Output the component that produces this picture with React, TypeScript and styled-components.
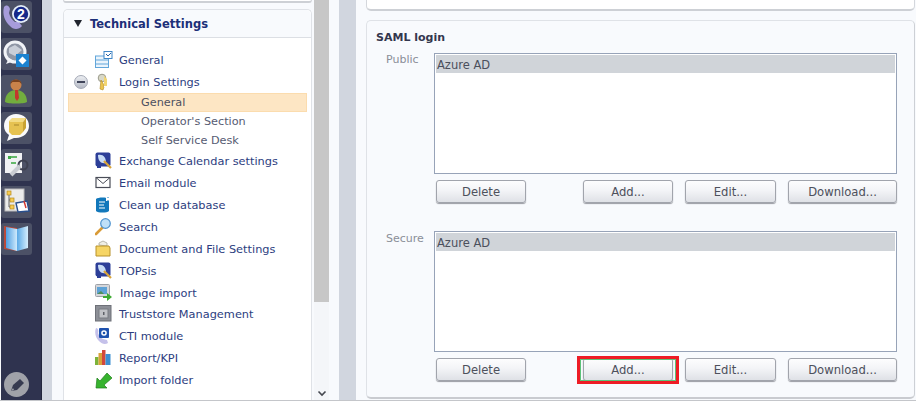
import React from "react";
import styled, { createGlobalStyle } from "styled-components";

const Global = createGlobalStyle`
  html, body { margin: 0; padding: 0; background: #f8fafd; overflow: hidden; }
  * { box-sizing: border-box; }
  body { font-family: "DejaVu Sans", Verdana, sans-serif; }
`;

const Page = styled.div`
  width: 916px; height: 401px; display: flex; overflow: hidden;
  background: #f8fafd; border-bottom: 1px solid #c4c6ca; padding-left: 1px;
`;
const Dock = styled.div`
  width: 41px; flex: none; background: #2f334f; display: flex; flex-direction: column;
  align-items: flex-start; gap: 5px; padding: 1px 0 3px 0; border-right: 1px solid #23263c;
`;
const Tile = styled.div`
  width: 31px; height: 32px; border-radius: 3px; background: #4c5166;
  display: flex; align-items: center; justify-content: center; flex: none;
`;
const DockEnd = styled.div`
  margin-top: auto; margin-left: 3px; width: 25px; height: 25px; border-radius: 50%;
  background: #a0a2a9; display: flex; align-items: center; justify-content: center;
`;
const Gutter = styled.div<{ $w: number }>`
  width: ${p => p.$w}px; flex: none; background: #d1d6df;
`;
const LeftColumn = styled.div`
  width: 287px; flex: none; display: flex; padding-left: 11px; background: #f8fafd;
`;
const LeftStack = styled.div`
  width: 249px; flex: none; display: flex; flex-direction: column; gap: 6px;
`;
const CardEnd = styled.div<{ $h: number }>`
  height: ${p => p.$h}px; flex: none; background: #fff; border: 1px solid #d4d7dc; border-top: none;
  border-bottom: 2px solid #cdd0d5; border-radius: 0 0 5px 5px;
`;
const Card = styled.div`
  flex: 1; background: #fff; border: 1px solid #dfe2e7; border-bottom: none; border-radius: 5px 5px 0 0;
  display: flex; flex-direction: column; min-height: 0;
`;
const CardHead = styled.div`
  height: 28px; flex: none; display: flex; align-items: center; gap: 8px; padding-left: 10px;
  background: #f8fafd; border-bottom: 1px solid #dcdfe4; border-radius: 5px 5px 0 0;
  font-size: 11.5px; font-weight: 700; color: #1c2f78;
`;
const Arrow = styled.span`
  width: 0; height: 0; border-left: 4px solid transparent; border-right: 4px solid transparent;
  border-top: 7px solid #20242e;
`;
const Tree = styled.div`
  padding: 11px 4px 0 4px; display: flex; flex-direction: column;
`;
const Row = styled.div<{ $nudge?: boolean }>`
  height: ${p => (p.$nudge ? 21 : 22)}px; flex: none; display: flex; align-items: center; color: #2c3d80;
  font-size: 11.35px; position: relative; padding-left: ${p => (p.$nudge ? 52 : 51)}px;
`;
const RowIcon = styled.span`
  position: absolute; left: 27px; top: 2px; width: 18px; height: 18px; display: block;
  svg { display: block; }
`;
const Toggle = styled.span`
  position: absolute; left: 6px; top: 4px; width: 14px; height: 14px; border-radius: 50%;
  background: linear-gradient(#eceef2, #b6bac5); border: 1px solid #a4a9b6;
  display: flex; align-items: center; justify-content: center;
  &::after { content: ""; width: 8px; height: 2px; background: #40455a; }
`;
const SubRow = styled.div<{ $on?: boolean }>`
  height: 19px; flex: none; display: flex; align-items: center; padding-left: 73px; font-size: 11.25px;
  color: #565b72;
  ${p => p.$on ? "background:#fde6c4; box-shadow: inset 0 0 0 1px #fbdcae; color:#4c4f60;" : ""}
`;
const Scrollbar = styled.div`
  width: 15px; flex: none; margin-left: 2px; background: #f4f6f9; display: flex; flex-direction: column;
  align-items: center; justify-content: space-between;
`;
const Thumb = styled.div`
  width: 15px; height: 302px; background: #c7c7c7; flex: none;
`;
const ScrollArrow = styled.div`
  height: 10px; display: flex; align-items: flex-start;
`;
const RightColumn = styled.div`
  flex: 1; display: flex; flex-direction: column; gap: 9px; padding: 0 1px 1px 10px; min-width: 0;
`;
const SamlCard = styled.section`
  flex: 1; background: #f8fafd; border: 1px solid #dfe2e7; border-bottom: 2px solid #c9cbd0; border-right-color: #cdd0d5;
  border-radius: 5px; padding: 9px 17px 0 9px; display: flex; flex-direction: column;
`;
const SamlTitle = styled.h3`
  margin: 0; font-size: 11px; font-weight: 700; color: #33364d; height: 15px; line-height: 15px;
`;
const FieldLabel = styled.div`
  padding: 0 0 0 10px; font-size: 11px; color: #8a8e98; line-height: 13px;
`;
const Field = styled.div`
  display: grid; grid-template-columns: 58px 1fr; margin-top: 8px;
  & + & { margin-top: 28px; }
  & + & ${FieldLabel} { padding-top: 1px; }
`;
const List = styled.div`
  height: 121px; background: #fff; border: 1px solid #97a3b8; padding: 1px;
`;
const ListItem = styled.div`
  height: 18px; background: #d0d4d9; font-size: 11.5px; color: #4b4f5c; line-height: 20px; padding-left: 1px;
`;
const Buttons = styled.div`
  display: flex; margin-top: 6px; padding-left: 2px;
`;
const Btn = styled.button<{ $w: number; $ml?: number }>`
  width: ${p => p.$w}px; height: 23px; margin-left: ${p => p.$ml ?? 0}px; padding: 0; flex: none;
  background: linear-gradient(#fdfdfe 0%, #f3f4f7 45%, #dfe1e6 100%);
  border: 1px solid #a1a4ac; border-radius: 3px; box-shadow: 0 1px 1px #9a9ca3;
  font: 11.6px "DejaVu Sans", Verdana, sans-serif; color: #4d505c; position: relative;
`;
const Highlight = styled.span`
  position: absolute; left: -7px; right: -7px; top: -3px; bottom: -4px;
  border: 3px solid #ee1c25; box-shadow: inset 0 0 0 1px #5cc27a; pointer-events: none;
`;

const I = ({ children }: { children: React.ReactNode }) => (
  <svg width="31" height="32" viewBox="0 0 31 32">{children}</svg>
);
const S = ({ children }: { children: React.ReactNode }) => (
  <svg width="18" height="18" viewBox="0 0 18 18">{children}</svg>
);

const dock = [
  <I key="1">
    <path d="M3 6c3-3 5-1 6 2l-1 4c1 4 3 7 6 9l3-1 4 5c-3 4-9 4-12 0C4 21 1 13 3 6z" fill="#a79cdb" />
    <circle cx="20" cy="13" r="9" fill="#e4edf8" />
    <circle cx="20" cy="13" r="7.2" fill="#16288a" />
    <text x="20" y="18" textAnchor="middle" fontSize="14" fontWeight="700" fill="#fff" fontFamily="Liberation Sans">2</text>
  </I>,
  <I key="2">
    <circle cx="14" cy="14" r="10" fill="#8f96a5" stroke="#f1f3f7" strokeWidth="3" />
    <path d="M8 10l6-3 7 5-7 6-6-3z" fill="#c9ced8" />
    <path d="M5 26l3-6 5 3z" fill="#f1f3f7" />
    <rect x="15" y="16" width="13" height="13" fill="#1b82d0" />
    <path d="M21.5 18.5l4 4-4 4-4-4z" fill="#fff" />
  </I>,
  <I key="3">
    <circle cx="15" cy="10" r="5.5" fill="#c9824a" />
    <path d="M9.5 9c0-6 11-6 11 0l-2-2h-7z" fill="#7a4320" />
    <path d="M4 27c0-8 5-12 11-12s11 4 11 12c-3 2-19 2-22 0z" fill="#72ad3e" />
    <path d="M14 15h3l1 8-2 3-2-3z" fill="#c4372c" />
  </I>,
  <I key="4">
    <path d="M15 2c8 0 13 5 13 12s-6 12-13 12h-2l-7 3 2-6c-3-2-5-5-5-9C3 7 8 2 15 2z" fill="#fafafa" />
    <path d="M8 9h14v11l-3 3H11l-3-3z" fill="#e6c251" />
    <path d="M8 9l3-3h14l-3 4H9z" fill="#f4dc85" />
    <path d="M22 10l3-4v10l-3 4z" fill="#c9a233" />
    <path d="M13 13h5" stroke="#a8872d" strokeWidth="1" />
  </I>,
  <I key="5">
    <rect x="4" y="4" width="17" height="20" fill="#f0f1f3" />
    <rect x="7" y="7" width="3" height="3" fill="#43ac49" />
    <path d="M10 8h6M10 14h5" stroke="#65b86b" strokeWidth="2" />
    <circle cx="22" cy="16" r="4.5" fill="none" stroke="#3d4050" strokeWidth="2" />
    <path d="M19 17l-9 9" stroke="#c9ccd2" strokeWidth="4" />
  </I>,
  <I key="6">
    <rect x="4" y="3" width="19" height="22" fill="#ececec" stroke="#b9b9b9" />
    <g fill="#f6cb52" stroke="#b48a1e" strokeWidth=".7">
      <rect x="6" y="5" width="4" height="4" /><rect x="9" y="12" width="4" height="4" /><rect x="9" y="19" width="4" height="4" />
    </g>
    <path d="M8 9v12h1M8 14h1" stroke="#666" fill="none" />
    <path d="M15 17l11-2 2 10-11 1z" fill="#fff" stroke="#294f8d" strokeWidth="1.4" />
    <path d="M23 15l2 7" stroke="#d33a32" strokeWidth="1.5" />
  </I>,
  <I key="7">
    <defs>
      <linearGradient id="bookL" x1="0" x2="1"><stop offset="0" stopColor="#4f9fe2" /><stop offset="1" stopColor="#cfeafc" /></linearGradient>
      <linearGradient id="bookR" x1="0" x2="1"><stop offset="0" stopColor="#5aa9e6" /><stop offset="1" stopColor="#d5edfd" /></linearGradient>
    </defs>
    <path d="M3 3l13 2v23L3 26z" fill="#b8493a" />
    <path d="M5 4l11 2v22L5 25z" fill="url(#bookL)" />
    <path d="M16 6l11-3v22l-11 3z" fill="url(#bookR)" />
  </I>,
];

const rowIcons: Record<string, React.ReactNode> = {
  general: <S><rect x="0.5" y="5" width="13" height="11.5" fill="#eaf4fc" stroke="#62a6da" /><path d="M1 9h13M1 13h13" stroke="#62a6da" /><rect x="9" y="0.5" width="8" height="7" fill="#fff" stroke="#3f86c7" /><path d="M11 3l2 2 3-3" stroke="#2463a8" fill="none" /></S>,
  login: <S><circle cx="7" cy="5" r="3.8" fill="#d8d8c8" stroke="#9c9c8c" /><path d="M6 7l-1 9 3 1 1-3-1-1 1-1z" fill="#eac34e" stroke="#b28a22" strokeWidth=".6" /><path d="M9 3l3 3v7h-3z" fill="#f2d675" /></S>,
  exch: <S><rect x="0.5" y="0.5" width="15" height="14" rx="2" fill="#2d3f98" /><path d="M3 3c5-1 8 2 8 8-5 1-8-2-8-8z" fill="#c8dcf5" /><path d="M9 9l7 7" stroke="#d8a43a" strokeWidth="2.2" /><rect x="2" y="14" width="4" height="2" fill="#2d3f98" /></S>,
  mail: <S><rect x="1" y="3.5" width="14" height="10" fill="#fff" stroke="#4a4d58" strokeWidth="1.2" /><path d="M1 3.5l7 6 7-6" fill="none" stroke="#4a4d58" /></S>,
  clean: <S><path d="M1 3c2-2 11-2 13 0v12c-2 2-11 2-13 0z" fill="#1278bb" /><path d="M4 6h6M4 9h5M4 12h6" stroke="#fff" strokeWidth="1.2" /><rect x="11" y="1" width="4" height="4" fill="#fff" /><path d="M13 1v1M13 4v1" stroke="#1278bb" /></S>,
  search: <S><path d="M8 9l-7 7" stroke="#d99b37" strokeWidth="2.6" strokeLinecap="round" /><circle cx="10.5" cy="5.5" r="4.8" fill="#bfe0f8" stroke="#4f93cf" strokeWidth="1.2" /></S>,
  doc: <S><path d="M4 5V3l4-2 4 2v3z" fill="#f0efe6" stroke="#a9a89b" strokeWidth=".8" /><path d="M1 6h13l1 2v8H1z" fill="#f6d565" stroke="#b8922c" /></S>,
  image: <S><rect x="0.5" y="0.5" width="14" height="12" rx="1" fill="#d4d6da" stroke="#9ea1a7" /><rect x="2" y="3" width="10" height="7" fill="#5ea2d6" /><path d="M2 10l4-3 3 3z" fill="#4f8c5a" /><path d="M8 12h4V9l5 4-5 4v-3H8z" fill="#3eaa32" /></S>,
  trust: <S><rect x="0.5" y="0.5" width="15.5" height="15.5" fill="#8c8f96" stroke="#6e7178" /><rect x="4" y="4" width="9" height="9" fill="#c0c2c6" stroke="#797c82" /><rect x="8" y="7" width="1.5" height="3" fill="#5d6066" /></S>,
  cti: <S><path d="M1 1c2 0 3 3 2 5 1 3 3 5 5 6l4 1 1 3c-3 2-6 1-9-2S-1 6 1 1z" fill="#c5c1ea" /><rect x="4" y="1" width="10" height="10" rx="1" fill="#1f52ae" /><circle cx="9" cy="6" r="2.8" fill="#fff" /><circle cx="9" cy="6" r="1.3" fill="#1f52ae" /></S>,
  report: <S><rect x="0" y="8" width="3.5" height="8" fill="#7db33a" /><rect x="3.5" y="4" width="3.5" height="12" fill="#d9a23a" /><rect x="7" y="1" width="3.5" height="15" fill="#d3483c" /><rect x="10.5" y="5" width="5" height="11" fill="#3d8fd1" /></S>,
  imp: <S><path d="M1 17L2 7l3 3 7-8 5 5-8 7 3 3z" fill="#37b32e" stroke="#1f7d1b" strokeWidth=".7" /></S>,
};

const TreeRow = ({ icon, label, toggle, nudge }: { icon: string; label: string; toggle?: boolean; nudge?: boolean }) => (
  <Row $nudge={nudge}>
    {toggle && <Toggle />}
    <RowIcon>{rowIcons[icon]}</RowIcon>
    {label}
  </Row>
);

const ButtonRow = ({ marked }: { marked?: boolean }) => (
  <Buttons>
    <Btn $w={90}>Delete</Btn>
    <Btn $w={90} $ml={57}>Add...{marked && <Highlight />}</Btn>
    <Btn $w={91} $ml={12}>Edit...</Btn>
    <Btn $w={109} $ml={12}>Download...</Btn>
  </Buttons>
);

export default function App() {
  return (
    <Page>
      <Global />
      <Dock>
        {dock.map((d, i) => <Tile key={i}>{d}</Tile>)}
        <DockEnd>
          <svg width="18" height="18" viewBox="0 0 18 18"><path d="M3 15l2-6 7-6 4 4-7 7z" fill="#363a50" /><path d="M3 15l2-3 1 2z" fill="#a0a2a9" /></svg>
        </DockEnd>
      </Dock>
      <Gutter $w={10} />
      <LeftColumn>
        <LeftStack>
          <CardEnd $h={3} />
          <Card>
            <CardHead><Arrow />Technical Settings</CardHead>
            <Tree>
              <TreeRow icon="general" label="General" />
              <TreeRow icon="login" label="Login Settings" toggle />
              <SubRow $on>General</SubRow>
              <SubRow>Operator's Section</SubRow>
              <SubRow>Self Service Desk</SubRow>
              <TreeRow icon="exch" label="Exchange Calendar settings" />
              <TreeRow icon="mail" label="Email module" />
              <TreeRow icon="clean" label="Clean up database" />
              <TreeRow icon="search" label="Search" />
              <TreeRow icon="doc" label="Document and File Settings" />
              <TreeRow icon="exch" label="TOPsis" />
              <TreeRow icon="image" label="Image import" nudge />
              <TreeRow icon="trust" label="Truststore Management" />
              <TreeRow icon="cti" label="CTI module" />
              <TreeRow icon="report" label="Report/KPI" />
              <TreeRow icon="imp" label="Import folder" />
            </Tree>
          </Card>
        </LeftStack>
        <Scrollbar>
          <Thumb />
          <ScrollArrow>
            <svg width="10" height="8" viewBox="0 0 10 8"><path d="M1.5 1.5L5 5l3.5-3.5" fill="none" stroke="#44474f" strokeWidth="1.6" /></svg>
          </ScrollArrow>
        </Scrollbar>
      </LeftColumn>
      <Gutter $w={17} />
      <RightColumn>
        <CardEnd $h={11} />
        <SamlCard>
          <SamlTitle>SAML login</SamlTitle>
          <Field>
            <FieldLabel>Public</FieldLabel>
            <div>
              <List><ListItem>Azure AD</ListItem></List>
              <ButtonRow />
            </div>
          </Field>
          <Field>
            <FieldLabel>Secure</FieldLabel>
            <div>
              <List><ListItem>Azure AD</ListItem></List>
              <ButtonRow marked />
            </div>
          </Field>
        </SamlCard>
      </RightColumn>
    </Page>
  );
}
